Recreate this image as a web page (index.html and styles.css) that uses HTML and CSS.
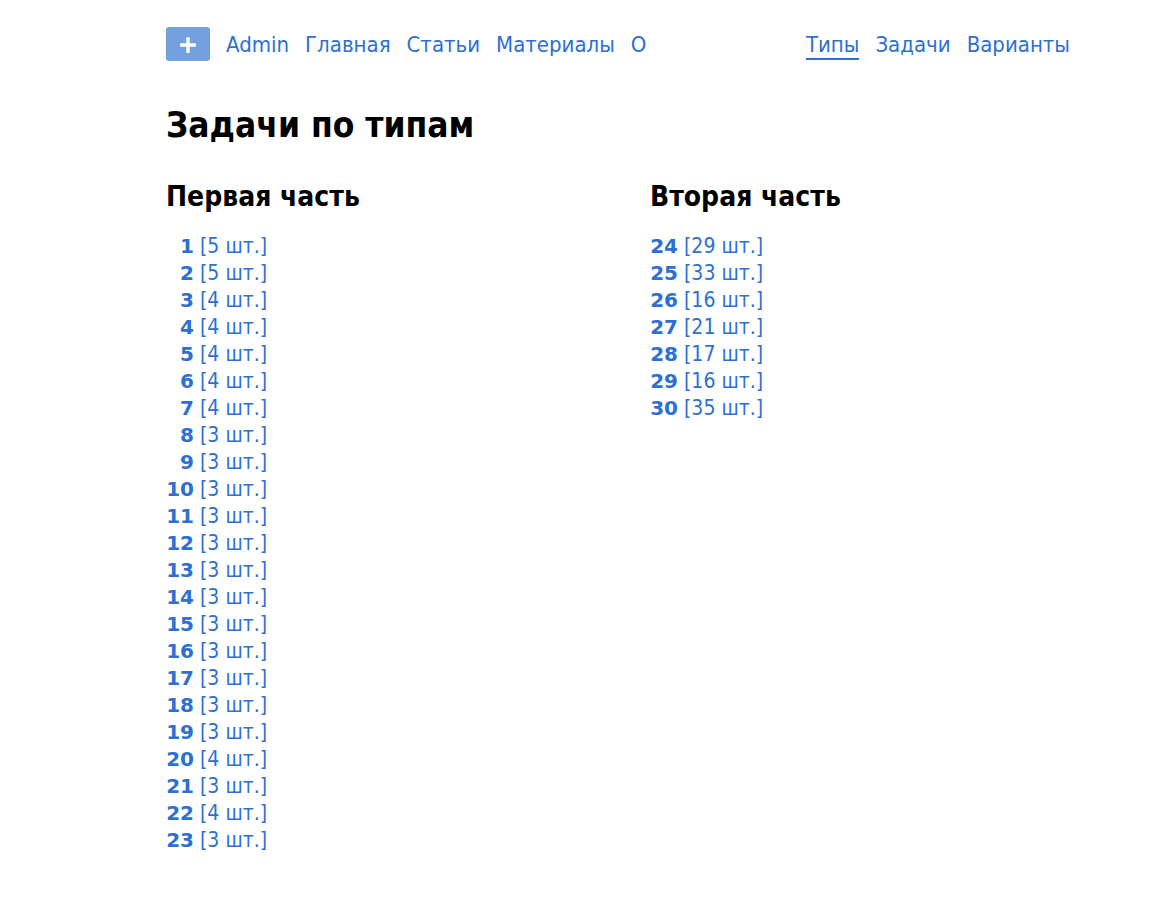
FILE: index.html
```html
<!DOCTYPE html>
<html lang="ru">
<head>
<meta charset="utf-8">
<meta name="viewport" content="width=device-width, initial-scale=1">
<title>Задачи по типам</title>
<link rel="stylesheet" href="styles.css">
</head>
<body>
<div class="page">
<header class="header">
<nav class="nav">
<button class="add" type="button" aria-label="Добавить"><svg class="add-icon" viewBox="0 0 16 16" aria-hidden="true"><path d="M8 1v14M1 8h14"/></svg></button>
<a href="#">Admin</a>
<a href="#">Главная</a>
<a href="#">Статьи</a>
<a href="#">Материалы</a>
<a href="#">О</a>
</nav>
<nav class="nav">
<a class="active" href="#">Типы</a>
<a href="#">Задачи</a>
<a href="#">Варианты</a>
</nav>
</header>
<main>
<h1>Задачи по типам</h1>
<div class="parts">
<section>
<h2>Первая часть</h2>
<ul class="types">
<li><a href="#"><b>1</b> [5 шт.]</a></li>
<li><a href="#"><b>2</b> [5 шт.]</a></li>
<li><a href="#"><b>3</b> [4 шт.]</a></li>
<li><a href="#"><b>4</b> [4 шт.]</a></li>
<li><a href="#"><b>5</b> [4 шт.]</a></li>
<li><a href="#"><b>6</b> [4 шт.]</a></li>
<li><a href="#"><b>7</b> [4 шт.]</a></li>
<li><a href="#"><b>8</b> [3 шт.]</a></li>
<li><a href="#"><b>9</b> [3 шт.]</a></li>
<li><a href="#"><b>10</b> [3 шт.]</a></li>
<li><a href="#"><b>11</b> [3 шт.]</a></li>
<li><a href="#"><b>12</b> [3 шт.]</a></li>
<li><a href="#"><b>13</b> [3 шт.]</a></li>
<li><a href="#"><b>14</b> [3 шт.]</a></li>
<li><a href="#"><b>15</b> [3 шт.]</a></li>
<li><a href="#"><b>16</b> [3 шт.]</a></li>
<li><a href="#"><b>17</b> [3 шт.]</a></li>
<li><a href="#"><b>18</b> [3 шт.]</a></li>
<li><a href="#"><b>19</b> [3 шт.]</a></li>
<li><a href="#"><b>20</b> [4 шт.]</a></li>
<li><a href="#"><b>21</b> [3 шт.]</a></li>
<li><a href="#"><b>22</b> [4 шт.]</a></li>
<li><a href="#"><b>23</b> [3 шт.]</a></li>
</ul>
</section>
<section>
<h2>Вторая часть</h2>
<ul class="types">
<li><a href="#"><b>24</b> [29 шт.]</a></li>
<li><a href="#"><b>25</b> [33 шт.]</a></li>
<li><a href="#"><b>26</b> [16 шт.]</a></li>
<li><a href="#"><b>27</b> [21 шт.]</a></li>
<li><a href="#"><b>28</b> [17 шт.]</a></li>
<li><a href="#"><b>29</b> [16 шт.]</a></li>
<li><a href="#"><b>30</b> [35 шт.]</a></li>
</ul>
</section>
</div>
</main>
</div>
</body>
</html>
```
FILE: styles.css
```css
* { box-sizing: border-box; }
body {
  margin: 0;
  background: #fff;
  color: #000;
  font-family: Tahoma, "DejaVu Sans Condensed", "Noto Sans", sans-serif;
}
a { color: #2d6fd2; text-decoration: none; }
.page {
  max-width: 1001px;
  margin: 0 auto;
  padding: 27px 9px 48px 88px;
}
.header {
  display: flex;
  flex-wrap: wrap;
  justify-content: space-between;
  gap: 16px;
}
.nav {
  display: flex;
  flex-wrap: wrap;
  align-items: center;
  gap: 16px;
  font-size: 22px;
  line-height: 26px;
}
.nav a { padding-top: 4px; border-bottom: 2px solid transparent; }
.nav .active { border-color: #2d6fd2; }
.add {
  display: flex;
  align-items: center;
  justify-content: center;
  width: 44px;
  height: 34px;
  padding: 2px 0 0;
  border: 0;
  border-radius: 3px;
  background: #72a0e0;
}
.add-icon {
  width: 18px;
  height: 18px;
  fill: none;
  stroke: #fff;
  stroke-width: 3;
}
h1, h2 { margin: 0; font-weight: 700; }
h1 { margin-top: 40px; font-size: 35px; line-height: 48px; }
h2 { margin-bottom: 16px; font-size: 28px; line-height: 40px; }
.parts {
  display: grid;
  grid-template-columns: 1fr 1fr;
  column-gap: 64px;
  margin-top: 28px;
}
.types {
  margin: 0;
  padding: 0;
  list-style: none;
  font-size: 21px;
  line-height: 27px;
}
.types b {
  display: inline-block;
  width: 28px;
  font-family: "DejaVu Sans", sans-serif;
  font-size: 20px;
  text-align: right;
}
```
